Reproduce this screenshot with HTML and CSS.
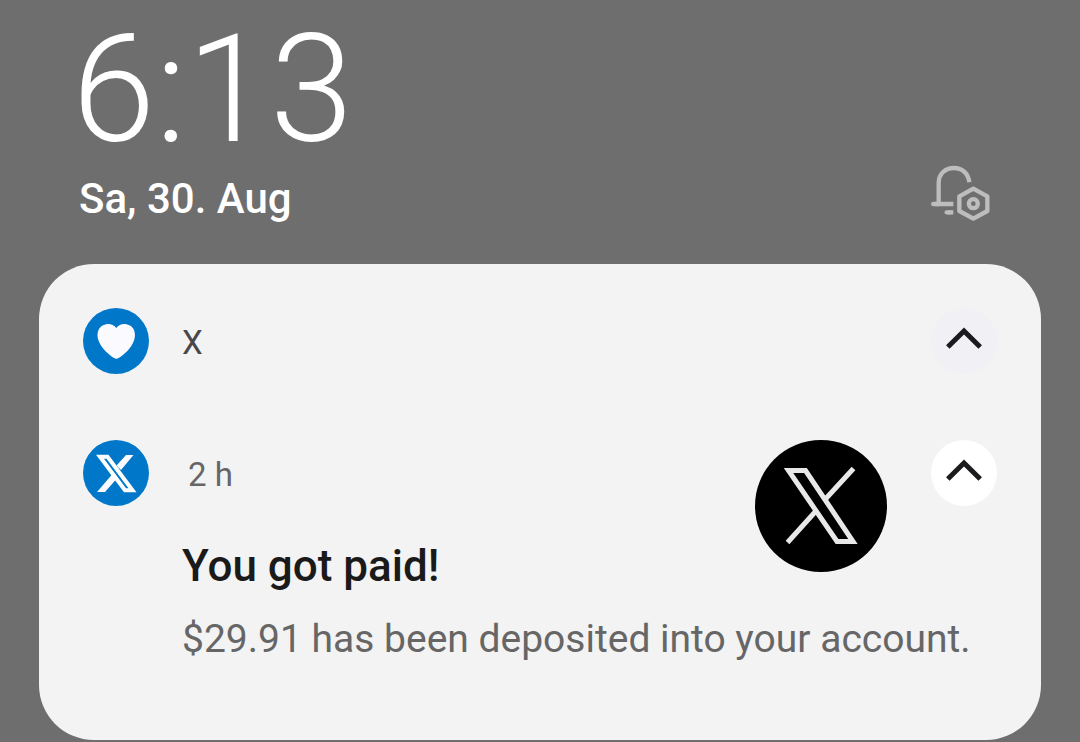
FILE: index.html
```html
<!DOCTYPE html>
<html lang="de">
<head>
<meta charset="utf-8">
<meta name="viewport" content="width=device-width, initial-scale=1">
<title>Notifications</title>
<link rel="stylesheet" href="styles.css">
</head>
<body>
<header class="status">
  <div class="datetime">
    <time class="clock">6:13</time>
    <time class="date">Sa, 30. Aug</time>
  </div>
  <button class="settings" type="button" aria-label="Notification settings">
    <svg class="bell" viewBox="33 30 177 168" fill="none" stroke="currentColor" stroke-width="13" aria-hidden="true">
      <path d="M56 146V84C56 56 76 39 102 39C127 39 145 56 148 82"/>
      <path d="M56 147H39.500" stroke-linecap="round"/>
      <path d="M45 147H100M84 172H100"/>
      <path d="M90 172H80" stroke-linecap="round"/>
      <path d="M160 101L202 124V168L160 191L118 168V124Z" stroke-linejoin="round"/>
      <circle cx="160" cy="146" r="13.500"/>
    </svg>
  </button>
</header>
<main class="card">
  <section class="group">
    <svg class="badge" viewBox="0 0 66 66" aria-hidden="true">
      <circle class="badge-disc" cx="33" cy="33" r="33"/>
      <path class="badge-mark" d="M33.300 20C30 15.300 24 15 19.500 17.500C14.500 20.500 13.500 27 15.500 32.500C18 40 26 47 31 50Q33.300 51.300 35.600 50C41 47 48.500 40 51 32.500C53 27 52 20.500 47 17.500C42.500 15 36.500 15.300 33.300 20Z"/>
    </svg>
    <h1 class="app">X</h1>
    <button class="toggle toggle-flat" type="button" aria-label="Collapse group">
      <svg class="chevron" viewBox="0 0 66 66" aria-hidden="true"><path d="M16.800 39L33 23L49.200 39"/></svg>
    </button>
  </section>
  <article class="notice">
    <svg class="badge" viewBox="0 0 66 66" aria-hidden="true">
      <circle class="badge-disc" cx="33" cy="33" r="33"/>
      <path class="badge-mark" d="M43 15H50.500L38 30L33.500 25.500ZM14 52H22L33 39.500L29 34.500Z"/>
      <path class="badge-line" d="M17 16.700H24.500L49.500 50.300H42Z"/>
    </svg>
    <span class="age">2 h</span>
    <svg class="avatar" viewBox="0 0 132 132" role="img" aria-label="X">
      <circle cx="66" cy="66" r="66"/>
      <path class="avatar-line" d="M33.500 30.500H50.500L98 101.500H82ZM98.500 28.500L70.500 59M32.500 102.500L60.500 71.500"/>
    </svg>
    <button class="toggle" type="button" aria-label="Collapse notification">
      <svg class="chevron" viewBox="0 0 66 66" aria-hidden="true"><path d="M16.800 39L33 23L49.200 39"/></svg>
    </button>
    <h2 class="title">You got paid!</h2>
    <p class="message">$29.91 has been deposited into your account.</p>
  </article>
</main>
</body>
</html>
```
FILE: styles.css
```css
* {
  box-sizing: border-box;
}

body {
  margin: 0;
  background: #6e6e6e;
  color: #fff;
  font-family: Roboto, "Liberation Sans", sans-serif;
}

h1, h2, p {
  margin: 0;
}

button {
  border: 0;
  padding: 0;
}

svg {
  display: block;
}

.status {
  display: flex;
  align-items: flex-end;
  justify-content: space-between;
  padding: 14px 90px 39px 72px;
}

.datetime {
  display: flex;
  flex-direction: column;
}

.clock {
  font-size: 150px;
  font-weight: 300;
  line-height: 152px;
}

.date {
  margin-top: 7px;
  padding-left: 7px;
  font-size: 42px;
  font-weight: 500;
  line-height: 52px;
}

.settings {
  background: none;
  color: #bdbdbd;
  padding-bottom: 4px;
}

.bell {
  width: 59px;
  height: 56px;
}

.card {
  margin: 0 39px 2px;
  padding: 44px 44px 78px;
  border-radius: 55px;
  background: #f3f3f3;
  color: #666;
}

.group {
  display: flex;
  align-items: center;
  margin-bottom: 66px;
}

.badge {
  width: 66px;
  height: 66px;
}

.badge-disc {
  fill: #0077c8;
}

.badge-mark {
  fill: #fafaff;
}

.badge-line {
  fill: #0077c8;
  stroke: #fff;
  stroke-width: 4;
}

.app {
  flex: 1;
  margin-left: 33px;
  padding-top: 2px;
  color: #48484a;
  font-size: 33px;
  font-weight: 400;
}

.toggle {
  width: 66px;
  height: 66px;
  border-radius: 50%;
  background: #fff;
}

.toggle-flat {
  background: #f1f0f4;
}

.chevron {
  width: 66px;
  height: 66px;
  fill: none;
  stroke: #1b1b1d;
  stroke-width: 5;
}

.notice {
  display: grid;
  grid-template-columns: 66px 1fr 132px 66px;
  grid-template-rows: 66px auto auto;
  column-gap: 33px;
}

.age {
  align-self: center;
  padding: 2px 0 0 6px;
  font-size: 33px;
}

.avatar {
  grid-column: 3;
  grid-row: 1 / 3;
  justify-self: end;
  width: 132px;
  height: 132px;
  margin-right: 11px;
}

.avatar-line {
  fill: none;
  stroke: #e8e8e8;
  stroke-width: 5;
}

.title {
  grid-column: 2;
  grid-row: 2;
  padding-top: 34px;
  color: #1a1a1a;
  font-size: 44px;
  font-weight: 500;
  line-height: 52px;
}

.message {
  grid-column: 2 / -1;
  grid-row: 3;
  margin-top: 24px;
  font-size: 39px;
  line-height: 46px;
}
```
